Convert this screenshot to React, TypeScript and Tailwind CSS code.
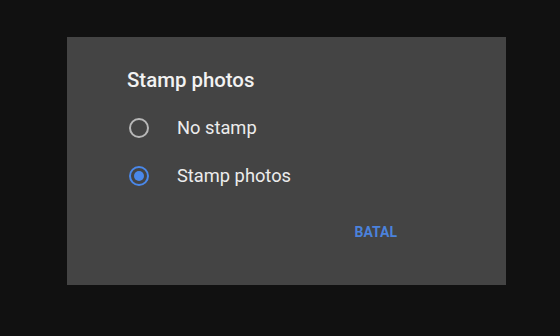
import { useState } from "react";

const options = ["No stamp", "Stamp photos"];

const Radio = ({ checked }: { checked: boolean }) => (
  <span
    className={`flex h-5 w-5 items-center justify-center rounded-full border-2 ${
      checked ? "border-[#4a88ea]" : "border-[#b8b8b8]"
    }`}
  >
    {checked && <span className="h-[10px] w-[10px] rounded-full bg-[#4a88ea]" />}
  </span>
);

export default function App() {
  const [selected, setSelected] = useState(1);

  return (
    <div
      className="h-[336px] w-[560px] bg-[#111111] pl-[67px] pt-[37px]"
      style={{ fontFamily: "Roboto, 'Noto Sans', sans-serif" }}
    >
      <div className="flex h-[248px] w-[439px] flex-col bg-[#444444] pl-[60px] pt-[29px]">
        {/* Dialog title */}
        <h2 className="text-[20.4px] leading-[28px] font-medium text-[#f2f2f2]">Stamp photos</h2>

        {/* Options */}
        <div className="mt-[10px] flex flex-col pl-[2px]">
          {options.map((label, i) => (
            <button
              key={label}
              onClick={() => setSelected(i)}
              className="flex h-12 items-center gap-7 text-left"
            >
              <Radio checked={selected === i} />
              <span className="text-[18.3px] text-[#ececec]">{label}</span>
            </button>
          ))}
        </div>

        {/* Actions */}
        <div className="mt-[22px] flex justify-end pr-[109px]">
          <button className="text-[14px] leading-5 font-bold uppercase text-[#4b82dc]">Batal</button>
        </div>
      </div>
    </div>
  );
}
